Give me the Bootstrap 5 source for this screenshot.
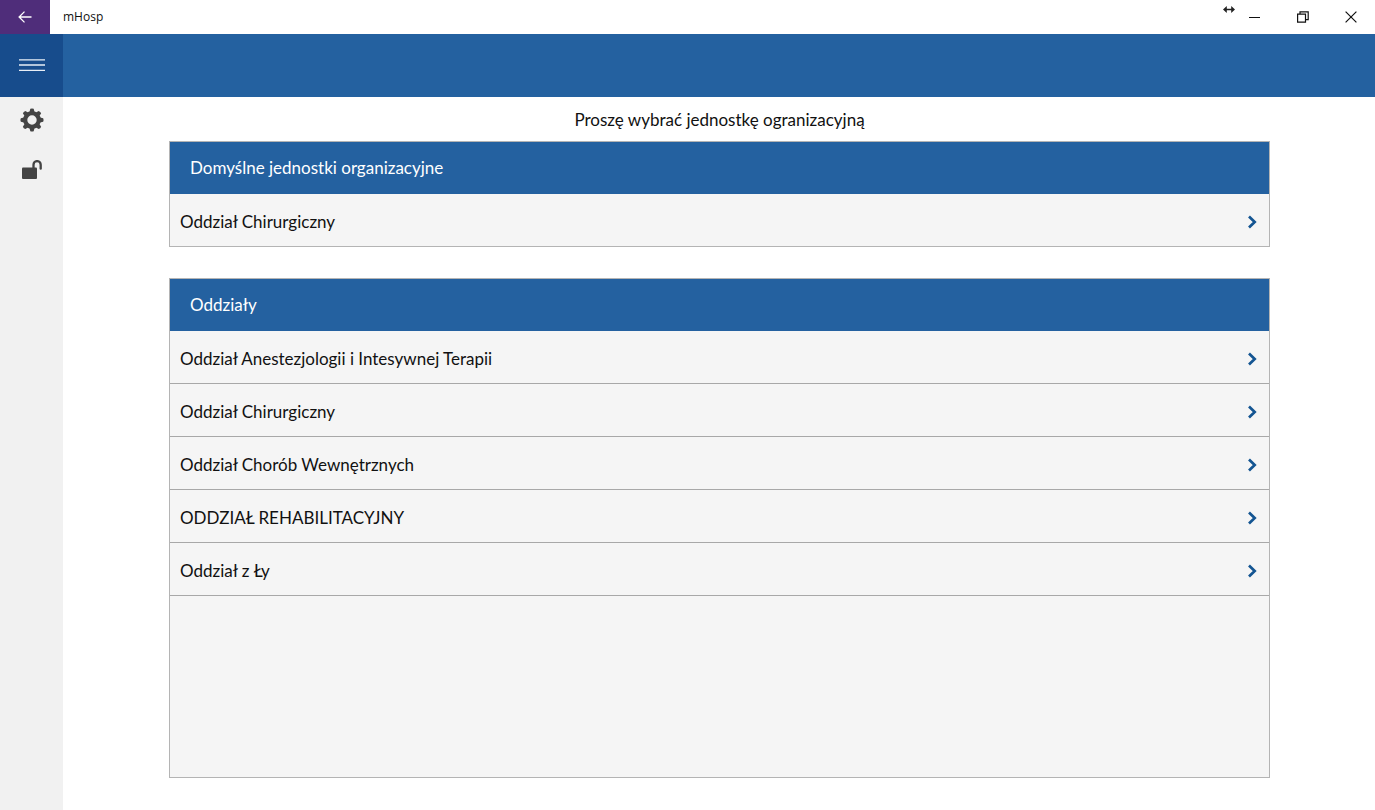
<!DOCTYPE html>
<html lang="pl">
<head>
<meta charset="utf-8">
<meta name="viewport" content="width=device-width, initial-scale=1">
<title>mHosp</title>
<link href="https://cdn.jsdelivr.net/npm/bootstrap@5.3.0/dist/css/bootstrap.min.css" rel="stylesheet">
<style>
  body { font-family: Lato, "Liberation Sans", sans-serif; font-size: 17px; line-height: 24px; color: #111; background: #fff; }
  svg { display: block; }
  button { color: inherit; }
  .title-bar { height: 34px; }
  .app-name { font: 12px/18px "Open Sans", "Noto Sans", sans-serif; color: #111; padding-left: 13px; }
  .back-btn { width: 50px; background: #4f2d7a; }
  .window-btn { width: 48px; }
  .resize-mark { margin-right: -4px; }
  .app-bar { height: 63px; background: #2461a0; }
  .menu-btn { width: 63px; background: #174c8c; }
  .side-nav { width: 63px; background: #f1f1f1; color: #444; }
  .side-btn { height: 46px; }
  .content { padding: 11px 105px 32px 106px; }
  .prompt { margin-bottom: 9px; }
  .unit-panel { background: #f5f5f5; border: 1px solid #b4b4b4; }
  .unit-panel + .unit-panel { margin-top: 31px; }
  .unit-head { font-size: 17px; line-height: 24px; padding: 14px 20px; background: #2461a0; color: #fff; }
  .unit-row { padding: 16px 10px 12px; border: 0; background: #f5f5f5; color: #111; }
  .unit-panel-fill .list-group > .unit-row { border-bottom: 1px solid #a8a8a8; }
  .chevron { color: #145592; }
</style>
</head>
<body>
<div class="d-flex flex-column min-vh-100">
  <div class="title-bar d-flex align-items-stretch">
    <button type="button" class="back-btn border-0 p-0 d-flex align-items-center justify-content-center text-white" aria-label="Wstecz">
      <svg width="14" height="12" viewBox="0 0 14 12" fill="none" stroke="currentColor" stroke-width="1.3"><path d="M13.5 6H1.2M6.5.6 1.1 6l5.4 5.4"/></svg>
    </button>
    <span class="app-name align-self-center">mHosp</span>
    <div class="d-flex ms-auto">
      <svg class="resize-mark mt-1" width="12" height="11" viewBox="0 0 12 11" fill="#222"><path d="M0 5.500 3.800 2v2.700h4.400V2L12 5.500 8.200 9V6.300H3.800V9z"/></svg>
      <button type="button" class="window-btn border-0 p-0 bg-transparent d-flex align-items-center justify-content-center" aria-label="Minimalizuj">
        <svg width="12" height="12" viewBox="0 0 12 12" stroke="#111"><path d="M0 6.500h11"/></svg>
      </button>
      <button type="button" class="window-btn border-0 p-0 bg-transparent d-flex align-items-center justify-content-center" aria-label="Przywróć">
        <svg width="12" height="12" viewBox="0 0 12 12" fill="none" stroke="#111" stroke-width="1.200"><path d="M.6 3.200h7.900v7.900H.6zM3 3V.8h8.200v7.900H8.800"/></svg>
      </button>
      <button type="button" class="window-btn border-0 p-0 bg-transparent d-flex align-items-center justify-content-center" aria-label="Zamknij">
        <svg width="12" height="12" viewBox="0 0 12 12" stroke="#111" stroke-width="1.200"><path d="m.6.6 10.800 10.800m0-10.800L.6 11.400"/></svg>
      </button>
    </div>
  </div>

  <header class="app-bar d-flex">
    <button type="button" class="menu-btn border-0 p-0 d-flex align-items-center justify-content-center" aria-label="Menu">
      <svg width="26" height="14" viewBox="0 0 26 14" stroke="#e8eef6" stroke-width="1.300"><path d="M0 .8h26M0 6h26M0 11.300h26"/></svg>
    </button>
  </header>

  <div class="d-flex flex-grow-1">
    <nav class="side-nav d-flex flex-column gap-1 flex-shrink-0" aria-label="Menu boczne">
      <button type="button" class="side-btn border-0 p-0 bg-transparent d-flex align-items-center justify-content-center" aria-label="Ustawienia">
        <svg width="24" height="24" viewBox="-12 -12 24 24" fill="currentColor">
          <circle r="6.800" fill="none" stroke="currentColor" stroke-width="4.200"/>
          <g id="teeth"><path id="tooth" d="M-2.500-8-1.700-11.200Q0-12 1.700-11.200L2.500-8z"/><use href="#tooth" transform="rotate(90)"/><use href="#tooth" transform="rotate(180)"/><use href="#tooth" transform="rotate(270)"/></g>
          <use href="#teeth" transform="rotate(45)"/>
        </svg>
      </button>
      <button type="button" class="side-btn border-0 p-0 bg-transparent d-flex align-items-center justify-content-center" aria-label="Odblokuj">
        <svg width="20" height="20" viewBox="0 0 20 20"><rect x="0" y="7.500" width="15" height="11.500" rx="1" fill="currentColor"/><path d="M11.500 8.500V4.700a3.600 3.600 0 0 1 7.200 0v4" fill="none" stroke="currentColor" stroke-width="2.300" stroke-linecap="round"/></svg>
      </button>
    </nav>

    <main class="content d-flex flex-column flex-grow-1">
      <p class="prompt text-center">Proszę wybrać jednostkę ogranizacyjną</p>

      <section class="unit-panel">
        <h2 class="unit-head fw-normal m-0">Domyślne jednostki organizacyjne</h2>
        <div class="list-group list-group-flush rounded-0">
          <button type="button" class="unit-row list-group-item list-group-item-action d-flex align-items-center justify-content-between">Oddział Chirurgiczny
            <svg class="chevron" width="12" height="14" viewBox="0 0 12 14" fill="none" stroke="currentColor" stroke-width="2.700"><path d="m2 1.500 5.700 5.500L2 12.500"/></svg></button>
        </div>
      </section>

      <section class="unit-panel unit-panel-fill flex-grow-1">
        <h2 class="unit-head fw-normal m-0">Oddziały</h2>
        <div class="list-group list-group-flush rounded-0">
          <button type="button" class="unit-row list-group-item list-group-item-action d-flex align-items-center justify-content-between">Oddział Anestezjologii i Intesywnej Terapii
            <svg class="chevron" width="12" height="14" viewBox="0 0 12 14" fill="none" stroke="currentColor" stroke-width="2.700"><path d="m2 1.500 5.700 5.500L2 12.500"/></svg></button>
          <button type="button" class="unit-row list-group-item list-group-item-action d-flex align-items-center justify-content-between">Oddział Chirurgiczny
            <svg class="chevron" width="12" height="14" viewBox="0 0 12 14" fill="none" stroke="currentColor" stroke-width="2.700"><path d="m2 1.500 5.700 5.500L2 12.500"/></svg></button>
          <button type="button" class="unit-row list-group-item list-group-item-action d-flex align-items-center justify-content-between">Oddział Chorób Wewnętrznych
            <svg class="chevron" width="12" height="14" viewBox="0 0 12 14" fill="none" stroke="currentColor" stroke-width="2.700"><path d="m2 1.500 5.700 5.500L2 12.500"/></svg></button>
          <button type="button" class="unit-row list-group-item list-group-item-action d-flex align-items-center justify-content-between">ODDZIAŁ REHABILITACYJNY
            <svg class="chevron" width="12" height="14" viewBox="0 0 12 14" fill="none" stroke="currentColor" stroke-width="2.700"><path d="m2 1.500 5.700 5.500L2 12.500"/></svg></button>
          <button type="button" class="unit-row list-group-item list-group-item-action d-flex align-items-center justify-content-between">Oddział z Ły
            <svg class="chevron" width="12" height="14" viewBox="0 0 12 14" fill="none" stroke="currentColor" stroke-width="2.700"><path d="m2 1.500 5.700 5.500L2 12.500"/></svg></button>
        </div>
      </section>
    </main>
  </div>
</div>
<script src="https://cdn.jsdelivr.net/npm/bootstrap@5.3.0/dist/js/bootstrap.bundle.min.js"></script>
</body>
</html>
